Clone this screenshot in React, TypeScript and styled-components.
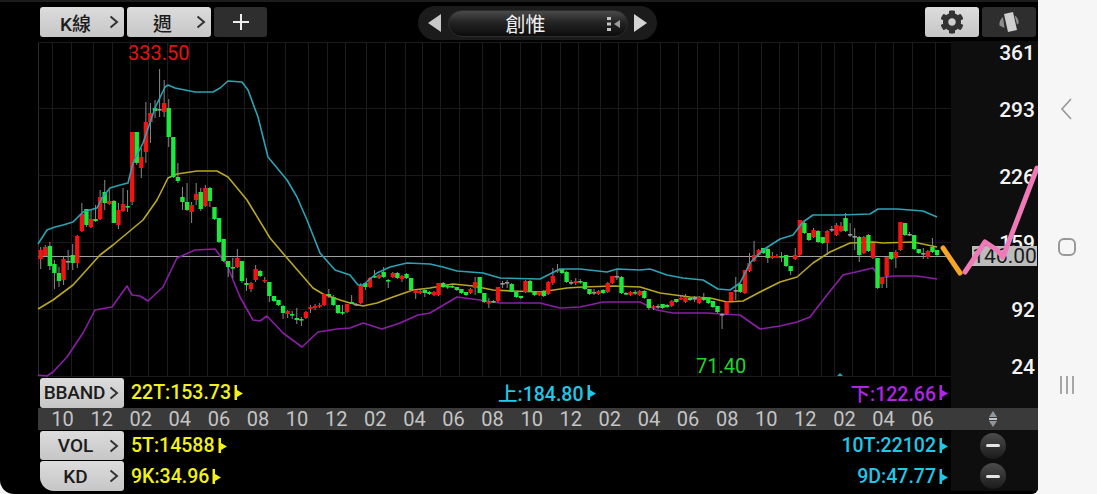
import React from 'react';
import styled, { createGlobalStyle } from 'styled-components';
import { FaCog } from 'react-icons/fa';

const GlobalStyle = createGlobalStyle`
  html, body {
    margin: 0;
    padding: 0;
    background: #f6f6f6;
    overflow: hidden;
  }
  #root {
    width: 1097px;
    height: 494px;
  }
`;

const Page = styled.div`
  display: flex;
  width: 1097px;
  height: 494px;
  font-family: Roboto, "Noto Sans CJK TC", sans-serif;
`;

const Screen = styled.div`
  width: 1038px;
  height: 494px;
  box-sizing: border-box;
  display: flex;
  flex-direction: column;
  background: #000;
  border-top: 2px solid #1c1c1c;
  border-bottom-right-radius: 6px;
  border-bottom-left-radius: 14px;
  overflow: hidden;
`;

const Toolbar = styled.div`
  height: 39px;
  display: grid;
  grid-template-columns: 378px 239px 1fr;
  align-items: start;
  padding-left: 40px;
`;

const ButtonGroup = styled.div<{ $end?: boolean }>`
  display: flex;
  gap: 3px;
  padding-top: 5px;
  justify-content: ${props => (props.$end ? 'flex-end' : 'flex-start')};
  padding-right: ${props => (props.$end ? '2px' : '0')};
`;

const PanelButton = styled.div<{ $width?: number; $cut?: boolean; $height?: number }>`
  width: ${props => props.$width ?? 84}px;
  height: ${props => props.$height ?? 30}px;
  box-sizing: border-box;
  display: flex;
  align-items: center;
  justify-content: center;
  position: relative;
  flex: none;
  padding-right: 13px;
  background: linear-gradient(#dcdcdc, #c6c6c6);
  border-radius: ${props => (props.$cut ? '3px 3px 3px 14px' : '3px')};
  color: #1c1c1c;
  font-size: 19px;
  font-weight: 500;
`;

const WideLabel = styled.span`
  margin-left: -2px;
  letter-spacing: -0.2px;
`;

const Chevron = styled.svg`
  position: absolute;
  right: 5px;
  top: 50%;
  margin-top: -7px;
  width: 10px;
  height: 14px;
`;

const DarkButton = styled.div<{ $width: number }>`
  width: ${props => props.$width}px;
  height: 30px;
  display: flex;
  align-items: center;
  justify-content: center;
  background: #2e2e2e;
  border-radius: 3px;
`;

const LightIconButton = styled(DarkButton)`
  background: linear-gradient(#dcdcdc, #c6c6c6);
  color: #333;
  font-size: 24px;
`;

const Selector = styled.div`
  margin-top: 4px;
  height: 34px;
  display: flex;
  align-items: center;
  justify-content: space-between;
  padding: 0 10px;
  background: #1b1b1b;
  border-radius: 17px;
`;

const NameField = styled.div`
  width: 180px;
  height: 27px;
  box-sizing: border-box;
  display: flex;
  align-items: center;
  justify-content: center;
  position: relative;
  padding-right: 24px;
  border-radius: 14px;
  border: 1px solid #2c2c2c;
  background: linear-gradient(#4a4a4a, #242424 45%, #0c0c0c);
  color: #eee;
  font-size: 20px;
`;

const ListIcon = styled.svg`
  position: absolute;
  right: 6px;
  top: 5px;
  width: 14px;
  height: 16px;
`;

const ChartRow = styled.div`
  position: relative;
  height: 336px;
  display: flex;
`;

const ChartSvg = styled.svg`
  width: 951px;
  height: 336px;
  flex: none;
  display: block;
  overflow: visible;
`;

const AxisColumn = styled.div`
  flex: 1;
  display: grid;
  grid-template-rows: 57px 67px 66px 67px 57px 22px;
  background: #0e0e0e;
  color: #f4f4f4;
  font-size: 21px;
  font-weight: 500;
  text-align: right;
  padding-right: 3px;
  line-height: 24px;
`;

const PriceTag = styled.div`
  position: absolute;
  left: 972px;
  top: 205px;
  width: 65px;
  height: 20px;
  background: #bcbcbc;
  color: #1a1a1a;
  font-size: 21px;
  line-height: 20px;
  text-align: center;
`;

const StrokeLayer = styled.svg`
  position: absolute;
  left: 0;
  top: 0;
  width: 1038px;
  height: 336px;
  pointer-events: none;
`;

const IndicatorRow = styled.div<{ $height: number }>`
  height: ${props => props.$height}px;
  display: flex;
  align-items: center;
`;

const IndicatorMain = styled.div`
  width: 951px;
  flex: none;
  height: 100%;
  box-sizing: border-box;
  display: flex;
  align-items: center;
  padding: 0 3px 0 40px;
  gap: 7px;
`;

const ValueArea = styled.div`
  flex: 1;
  display: flex;
  align-items: center;
  justify-content: space-between;
`;

const SideCell = styled.div`
  flex: 1;
  height: 100%;
  display: flex;
  align-items: center;
  justify-content: center;
  background: #0e0e0e;
  padding-right: 4px;
  box-sizing: border-box;
`;

const Value = styled.span<{ $color: string }>`
  display: inline-flex;
  align-items: center;
  gap: 3px;
  color: ${props => props.$color};
  font-size: 19.5px;
  font-weight: 500;
`;

const DateBar = styled.div`
  height: 22px;
  margin-left: 38px;
  display: flex;
  background: #3a3a3a;
`;

const DateTrack = styled.div`
  width: 913px;
  box-sizing: border-box;
  padding-left: 5px;
  display: grid;
  grid-auto-flow: column;
  grid-auto-columns: 39.1px;
  justify-content: start;
  color: #c4c4c4;
  font-size: 20px;
  line-height: 22px;
  text-align: center;
`;

const SortCell = styled.div`
  flex: 1;
  display: flex;
  align-items: center;
  justify-content: center;
  padding-right: 4px;
`;

const MinusButton = styled.div`
  width: 26px;
  height: 26px;
  border-radius: 50%;
  display: flex;
  align-items: center;
  justify-content: center;
  background: linear-gradient(#4c4c4c, #1a1a1a);
  &::after {
    content: '';
    width: 14px;
    height: 3px;
    border-radius: 2px;
    background: #e4e4e4;
  }
`;

const NavBar = styled.nav`
  flex: 1;
  display: flex;
  flex-direction: column;
  align-items: center;
  justify-content: center;
  gap: 114px;
  background: #f6f6f6;
  color: #999;
  padding-right: 1px;
`;

const NavIcon = styled.svg`
  width: 24px;
  height: 24px;
  fill: none;
  stroke: currentColor;
  stroke-width: 1.7;
`;

type Candle = [string, number, number, number, number];

// weekly bars, pixel values: body top, body bottom, wick top, wick bottom
const CANDLES: Candle[] = [
  ['r',250,259,247,269],['r',247,256,245,256],['g',246,266,242,270],['g',264,273,260,289],['g',273,281,267,287],
  ['r',259,280,257,285],['n',261,262,250,270],['g',255,263,244,270],['r',236,263,235,268],['r',214,231,203,232],
  ['g',209,225,209,227],['r',219,227,210,228],['g',219,221,205,222],['r',197,219,190,220],['g',192,203,180,210],
  ['r',201,204,190,205],['g',201,223,200,223],['r',210,225,203,229],['r',204,211,188,212],['g',206,207,190,212],
  ['r',132,202,132,205],['g',132,163,132,165],['r',157,168,148,178],['r',122,152,102,163],['r',113,122,103,143],
  ['g',108,111,100,118],['n',109,110,69,117],['r',103,112,80,117],['g',108,137,99,147],['g',137,177,137,178],
  ['g',177,181,163,183],['g',197,202,187,210],['g',202,210,183,211],['r',205,212,202,223],['r',194,200,183,205],
  ['g',192,209,188,211],['r',188,206,185,207],['g',188,201,187,207],['g',207,219,207,220],['g',218,242,218,243],
  ['g',239,261,239,262],['g',261,267,261,277],['g',267,268,258,278],['r',258,267,249,268],['g',261,281,261,283],
  ['g',283,285,278,291],['r',283,289,282,292],['r',269,280,265,282],['g',271,276,270,277],['r',280,281,277,283],
  ['g',282,296,282,302],['g',296,301,296,302],['g',300,305,300,306],['g',306,313,305,319],['r',311,314,310,318],
  ['g',314,315,311,319],['g',318,320,308,324],['g',319,320,317,326],['r',312,318,311,319],['r',307,309,305,313],
  ['r',306,308,304,310],['r',305,306,303,308],['r',294,305,294,306],['g',294,296,289,298],['g',297,305,295,306],
  ['g',305,313,305,314],['g',312,313,305,315],['r',304,312,304,313],['g',302,303,295,304],['n',304,305,303,306],
  ['r',285,303,283,304],['g',283,287,283,290],['r',278,287,277,288],['g',276,277,270,278],['r',275,278,274,279],
  ['g',272,277,267,278],['g',280,281,279,288],['r',273,277,272,278],['g',273,278,272,279],['r',276,279,275,282],
  ['g',274,278,273,279],['g',278,290,278,291],['r',290,293,290,299],['r',291,293,290,294],['g',290,293,288,297],
  ['g',292,294,291,295],['r',292,295,291,296],['r',283,295,283,296],['g',283,287,282,288],['g',286,287,284,289],
  ['g',286,287,285,288],['g',287,290,287,291],['g',289,293,289,294],['g',292,295,292,296],['r',289,293,288,294],
  ['r',282,288,277,295],['g',277,293,277,293],['g',293,302,293,303],['r',302,303,298,308],['g',301,302,300,303],
  ['r',287,301,287,302],['n',283,284,281,288],['n',282,283,280,288],['g',284,292,283,292],['g',292,297,292,298],
  ['g',296,298,296,299],['r',281,292,280,293],['g',281,291,280,292],['g',291,295,291,296],['r',292,295,291,296],
  ['g',291,296,290,297],['r',282,294,281,295],['r',276,283,268,285],['r',270,271,264,273],['g',269,273,269,274],
  ['g',272,282,271,283],['n',282,283,280,285],['r',281,283,278,285],['g',281,282,279,284],['g',282,289,282,290],
  ['g',289,294,289,295],['n',292,293,289,295],['r',291,294,290,295],['g',290,293,289,294],['r',283,292,282,293],
  ['r',276,283,276,284],['n',276,277,269,280],['g',277,293,276,294],['g',293,294,292,295],['r',292,295,291,296],
  ['g',292,293,290,295],['r',291,295,290,296],['g',291,298,290,299],['g',299,308,299,310],['r',306,307,305,310],
  ['n',306,307,304,309],['g',304,308,304,309],['g',305,307,304,308],['r',301,306,300,307],['g',299,302,299,303],
  ['r',298,299,296,300],['r',297,302,294,303],['g',298,300,297,301],['n',298,299,296,302],['r',297,303,296,304],
  ['g',298,300,293,301],['g',298,303,298,304],['g',301,307,301,308],['g',306,312,306,313],['n',314,315,313,329],
  ['r',302,314,302,315],['r',292,301,292,302],['n',290,291,277,300],['g',284,292,284,293],['r',270,293,270,294],
  ['r',263,271,253,272],['r',255,261,241,262],['r',250,255,249,256],['g',248,253,248,254],['g',249,258,247,263],
  ['r',256,258,252,259],['r',256,257,254,258],['g',256,257,252,262],['g',255,266,255,267],['g',266,271,266,275],
  ['r',255,259,248,260],['r',220,255,220,256],['g',223,233,221,234],['g',233,240,233,241],['r',230,237,228,238],
  ['g',231,242,230,243],['g',237,243,237,244],['r',231,243,230,255],['n',229,230,226,232],['r',225,235,223,236],
  ['r',226,231,222,232],['g',218,231,213,232],['n',234,235,223,237],['n',236,237,228,250],['g',237,255,236,262],
  ['r',237,253,236,254],['g',235,251,234,252],['r',243,258,243,259],['g',258,288,258,289],['r',277,284,277,288],
  ['r',257,276,257,288],['g',252,259,252,260],['r',252,258,250,268],['r',222,250,222,251],['g',223,235,223,236],
  ['n',234,235,232,236],['g',235,249,235,250],['g',249,253,249,254],['n',253,254,248,259],['r',251,257,250,259],
  ['g',247,252,238,253],['g',250,255,250,256],
];

const UPPER_BAND = '38,244 47,230 55,227 63,225 73,222 83,212 97,208 102,198 110,188 120,185 128,183 133,163 143,143 155,108 165,87 168,85 175,88 195,92 213,92 220,88 228,81 242,82 248,90 258,117 268,157 287,180 297,197 307,220 320,253 335,270 350,275 358,285 363,285 377,273 390,267 407,263 430,264 443,267 457,271 483,273 500,278 540,279 548,275 560,269 580,269 607,272 617,269 640,270 650,269 667,275 683,278 703,280 718,289 730,290 740,283 750,263 763,250 780,239 793,235 803,222 813,215 840,215 870,214 878,209 897,209 923,211 937,217';
const MID_BAND = '38,309 53,300 73,285 100,255 113,245 143,220 157,200 168,178 177,174 197,171 217,171 228,177 247,200 270,238 287,258 313,288 323,294 340,300 350,303 363,306 377,303 393,297 413,290 430,288 453,284 473,286 493,290 513,291 540,292 567,288 583,287 613,286 640,287 660,293 690,297 710,298 727,302 743,301 760,292 780,282 797,277 813,263 830,252 850,243 873,242 883,243 913,242 937,247';
const LOWER_BAND = '38,375 47,376 53,372 67,357 83,333 95,310 112,307 127,286 132,295 140,296 148,301 163,287 177,258 195,250 215,249 227,265 240,297 253,320 260,321 267,316 283,333 302,347 318,332 337,329 350,328 363,323 382,329 400,323 418,315 430,313 457,297 480,300 500,303 540,303 560,308 580,307 603,302 640,302 657,310 673,313 707,313 722,314 740,315 760,329 780,326 797,322 810,317 827,295 843,275 873,268 880,278 893,276 917,276 937,279';

const V_LINES = [38,52,71,93,112,130,148,167,189,207,227,244,267,285,308,327,345,366,385,405,422,440,459,482,500,520,541,560,578,600,618,637,660,678,697,719,738,761,779,798,821,834,852,875,893,912,935,953];
const H_LINES = [42,108,175,242,309,376];
const DATES = ['10','12','02','04','06','08','10','12','02','04','06','08','10','12','02','04','06','08','10','12','02','04','06'];
const AXIS = ['361','293','226','159','92','24'];

const BODY_COLOR: Record<string, string> = { r: '#f01414', g: '#1fe83c', n: '#9a9a9a' };

const ChevronMark = () => (
  <Chevron viewBox="0 0 10 14">
    <path d="M1.5 1.500 8 7 1.500 12.500" fill="none" stroke="#333" strokeWidth="2" />
  </Chevron>
);

const Pointer = ({ color }: { color: string }) => (
  <svg width="9" height="15" viewBox="0 0 9 15">
    <path d="M0.500 0h2.500v5l6 3.500-6 3.500v3H0.500z" fill={color} />
  </svg>
);

const Chart = () => (
  <ChartSvg viewBox="0 41 951 336">
    {V_LINES.map(x => (
      <line key={x} x1={x + 0.5} x2={x + 0.5} y1={42} y2={376} stroke={x === 38 ? '#2c2c2c' : '#1c1c1c'} strokeWidth="1" />
    ))}
    {H_LINES.map(y => (
      <line key={y} x1={38} x2={953} y1={y + 0.5} y2={y + 0.5} stroke="#1a1a1a" strokeWidth="1" />
    ))}
    <line x1={38} x2={951} y1={256.5} y2={256.5} stroke="#a0a0a0" strokeWidth="1" />
    <polyline points={LOWER_BAND} fill="none" stroke="#8a1fa6" strokeWidth="1.6" strokeLinejoin="round" />
    <polyline points={MID_BAND} fill="none" stroke="#b9a722" strokeWidth="1.6" strokeLinejoin="round" />
    {CANDLES.map(([kind, top, bottom, wickTop, wickBottom], i) => {
      const x = 40.7 + i * 4.573;
      return (
        <g key={i}>
          <line x1={x} x2={x} y1={wickTop} y2={wickBottom} stroke="#8a8a8a" strokeWidth="1" />
          <rect x={x - 2.2} y={top} width={4.4} height={Math.max(bottom - top, 1.6)} fill={BODY_COLOR[kind]} />
        </g>
      );
    })}
    <polyline points={UPPER_BAND} fill="none" stroke="#2ba3b5" strokeWidth="1.6" strokeLinejoin="round" />
    <path d="M837 376l3-3 3 3z" fill="#2ba3b5" />
    <text x={128} y={60} fill="#e81212" fontSize="20" fontFamily="Roboto, sans-serif">333.50</text>
    <text x={696} y={373} fill="#1fd42f" fontSize="20" fontFamily="Roboto, sans-serif">71.40</text>
  </ChartSvg>
);

const App: React.FC = () => (
  <Page>
    <GlobalStyle />
    <Screen>
      <Toolbar>
        <ButtonGroup>
          <PanelButton>K線<ChevronMark /></PanelButton>
          <PanelButton>週<ChevronMark /></PanelButton>
          <DarkButton $width={53}>
            <svg width="16" height="16" viewBox="0 0 16 16">
              <path d="M8 0v16M0 8h16" stroke="#eee" strokeWidth="2" />
            </svg>
          </DarkButton>
        </ButtonGroup>
        <Selector>
          <svg width="13" height="18" viewBox="0 0 13 18"><path d="M13 0v18L0 9z" fill="#c8c8c8" /></svg>
          <NameField>
            創惟
            <ListIcon viewBox="0 0 14 16">
              <path d="M0 1h4v3H0zM0 6.500h4v3H0zM0 12h4v3H0z" fill="#c4c4c4" />
              <path d="M13 4v8L7 8z" fill="#9c9c9c" />
            </ListIcon>
          </NameField>
          <svg width="13" height="18" viewBox="0 0 13 18"><path d="M0 0v18L13 9z" fill="#d4d4d4" /></svg>
        </Selector>
        <ButtonGroup $end>
          <LightIconButton $width={54}><FaCog /></LightIconButton>
          <DarkButton $width={54}>
            <svg width="22" height="22" viewBox="0 0 22 22">
              <path d="M6 3 15 1l4 18-9 2z" fill="#cfcfcf" />
              <path d="M5 6C2.500 8 1 11 1.500 14.500L6.500 17zM16.500 4.500C19.500 6 21 9 20.500 12.500L19 13.500z" fill="#8e8e8e" />
            </svg>
          </DarkButton>
        </ButtonGroup>
      </Toolbar>

      <ChartRow>
        <Chart />
        <AxisColumn>
          {AXIS.map(label => <div key={label}>{label}</div>)}
        </AxisColumn>
        <PriceTag>146.00</PriceTag>
        <StrokeLayer viewBox="0 41 1038 336">
          <path d="M943 248 960 273" fill="none" stroke="#f6a623" strokeWidth="5" strokeLinecap="round" />
          <path d="M965 272 985 242 997 250 1003 257 1037 168" fill="none" stroke="#f07ab8" strokeWidth="5" strokeLinecap="round" strokeLinejoin="round" />
        </StrokeLayer>
      </ChartRow>

      <IndicatorRow $height={31}>
        <IndicatorMain>
          <PanelButton $height={30}><WideLabel>BBAND</WideLabel><ChevronMark /></PanelButton>
          <ValueArea>
            <Value $color="#f2f216">22T:153.73<Pointer color="#f2f216" /></Value>
            <Value $color="#1fc8e8">上:184.80<Pointer color="#1fc8e8" /></Value>
            <Value $color="#b024e4">下:122.66<Pointer color="#b024e4" /></Value>
          </ValueArea>
        </IndicatorMain>
        <SideCell />
      </IndicatorRow>

      <DateBar>
        <DateTrack>
          {DATES.map((d, i) => <span key={i}>{d}</span>)}
        </DateTrack>
        <SortCell>
          <svg width="10" height="16" viewBox="0 0 10 16">
            <path d="M5 0l4 6H1z" fill="#8c98a0" />
            <path d="M5 16l4-6H1z" fill="#8c98a0" />
            <path d="M1 7h8v2H1z" fill="#c4c4c4" />
          </svg>
        </SortCell>
      </DateBar>

      <IndicatorRow $height={31}>
        <IndicatorMain>
          <PanelButton $height={29}>VOL<ChevronMark /></PanelButton>
          <ValueArea>
            <Value $color="#f2f216">5T:14588<Pointer color="#f2f216" /></Value>
            <Value $color="#1fc8e8">10T:22102<Pointer color="#1fc8e8" /></Value>
          </ValueArea>
        </IndicatorMain>
        <SideCell><MinusButton /></SideCell>
      </IndicatorRow>

      <IndicatorRow $height={30}>
        <IndicatorMain>
          <PanelButton $height={30} $cut>KD<ChevronMark /></PanelButton>
          <ValueArea>
            <Value $color="#f2f216">9K:34.96<Pointer color="#f2f216" /></Value>
            <Value $color="#1fc8e8">9D:47.77<Pointer color="#1fc8e8" /></Value>
          </ValueArea>
        </IndicatorMain>
        <SideCell><MinusButton /></SideCell>
      </IndicatorRow>
    </Screen>

    <NavBar>
      <NavIcon viewBox="0 0 24 24"><path d="M16 2 7 12l9 10" /></NavIcon>
      <NavIcon viewBox="0 0 24 24"><rect x="4" y="4" width="16" height="16" rx="5" strokeWidth="2" /></NavIcon>
      <NavIcon viewBox="0 0 24 24"><path d="M6 3v18M12 3v18M18 3v18" /></NavIcon>
    </NavBar>
  </Page>
);

export default App;
